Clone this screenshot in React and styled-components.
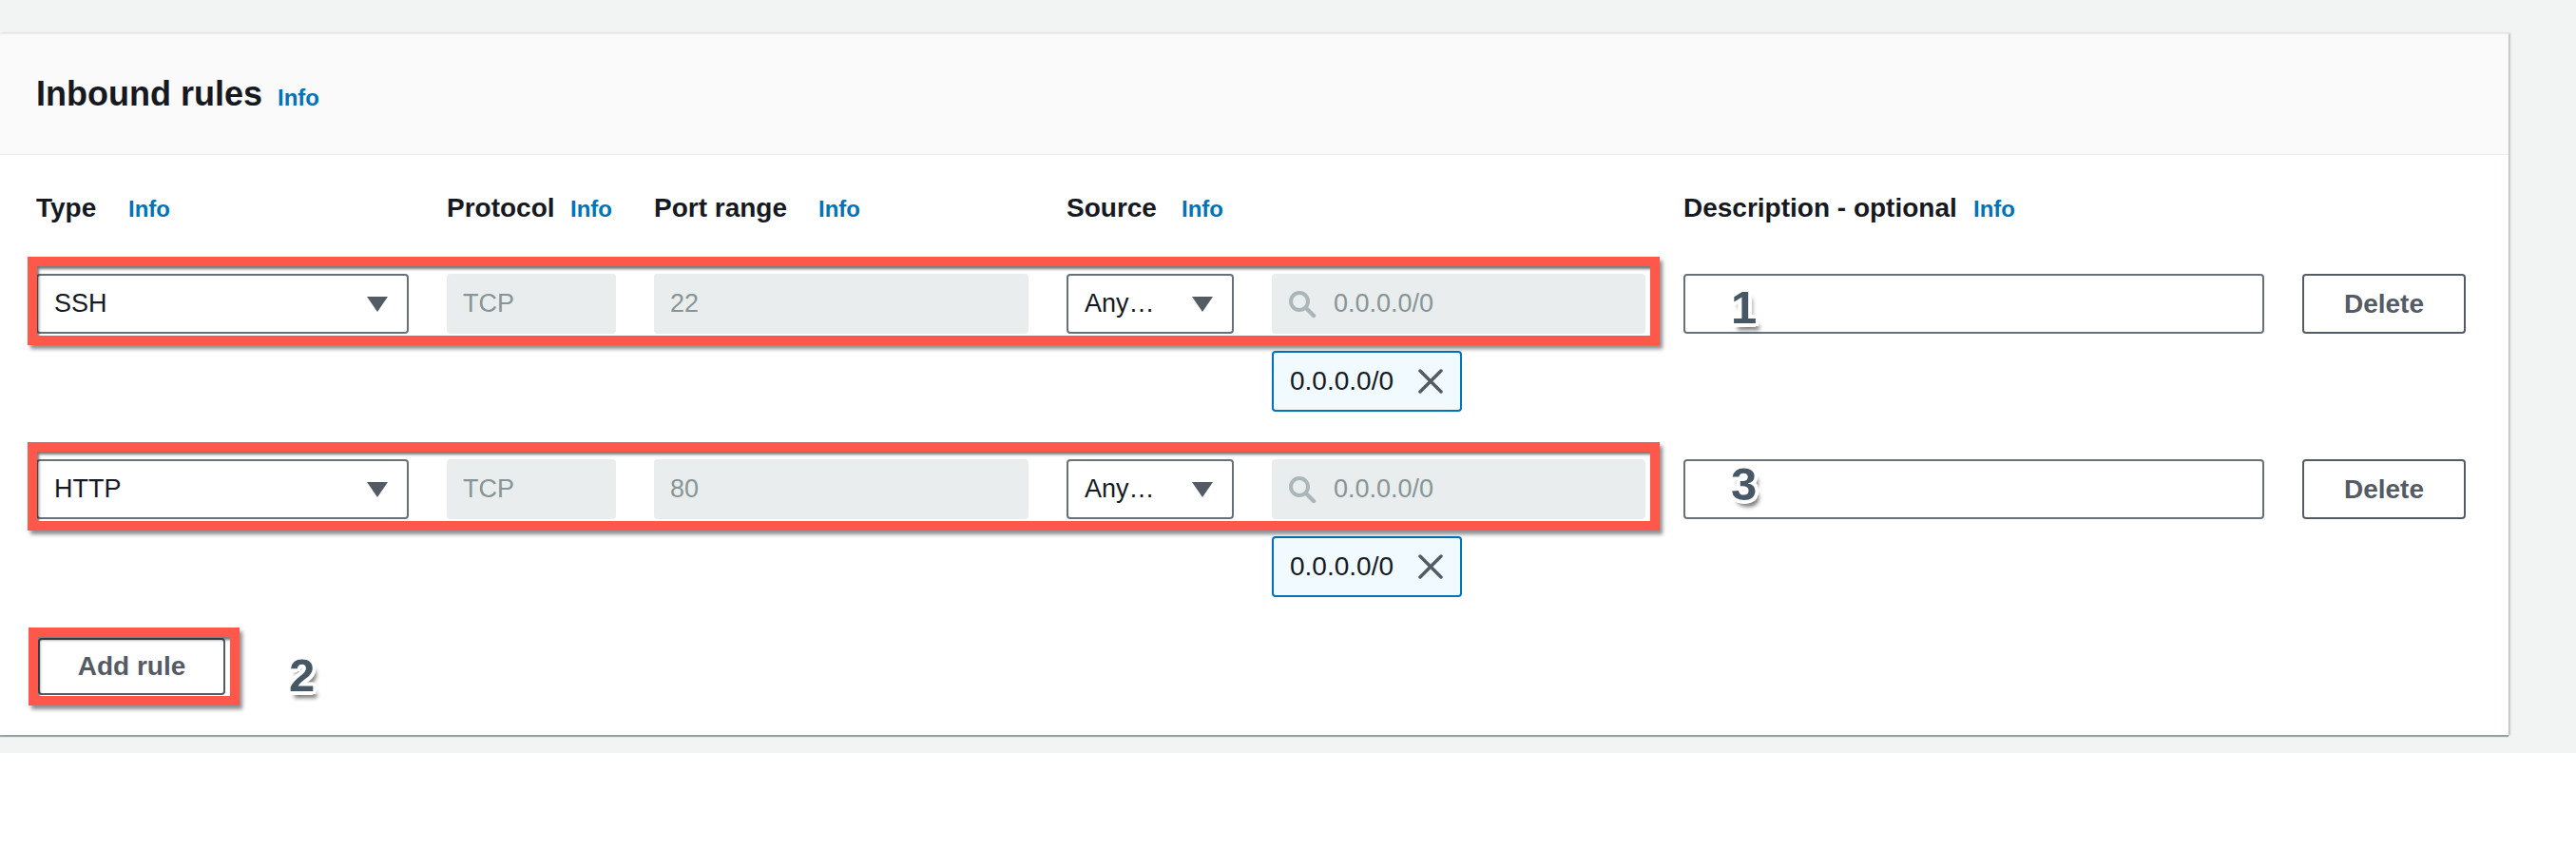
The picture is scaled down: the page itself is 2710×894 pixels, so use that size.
import React from 'react';
import styled, { createGlobalStyle } from 'styled-components';

const GlobalStyle = createGlobalStyle`
  html, body {
    margin: 0;
    padding: 0;
    background: #fff;
  }
  body {
    font-family: "Liberation Sans", Arial, sans-serif;
    color: #16191f;
  }
`;

const COLS = '392px 178px 394px 176px 393px 611px 172px';

const Page = styled.div`
  background: #f2f3f3;
  padding: 35px 71px 19px 0;
`;

const Panel = styled.section`
  background: #fff;
  border-top: 1px solid #eaeded;
  box-shadow: 0 2px 1px 0 rgba(0, 28, 36, 0.35), 2px 0 2px 0 rgba(0, 28, 36, 0.2);
`;

const PanelHeader = styled.header`
  height: 126px;
  background: #fafafa;
  border-bottom: 1px solid #eaeded;
  display: flex;
  align-items: center;
  padding: 0 38px;
`;

const Title = styled.h2`
  margin: 0;
  display: flex;
  align-items: baseline;
  font-size: 36px;
  font-weight: 700;
  color: #16191f;
`;

const InfoLink = styled.a`
  font-size: 24px;
  font-weight: 700;
  color: #0073bb;
  text-decoration: none;
  margin-left: ${(p) => p.$gap || 0}px;
`;

const PanelBody = styled.div`
  padding: 36px 38px 38px;
  display: flex;
  flex-direction: column;
`;

const ColumnHeaders = styled.div`
  display: grid;
  grid-template-columns: ${COLS};
  column-gap: 40px;
  height: 40px;
  align-items: center;
  margin-bottom: 49px;
`;

const HeadCell = styled.div`
  display: flex;
  align-items: baseline;
  grid-column: ${(p) => p.$col};
`;

const Label = styled.span`
  font-size: 28px;
  font-weight: 700;
  color: #16191f;
  min-width: ${(p) => p.$w}px;
`;

const Rules = styled.div`
  display: flex;
  flex-direction: column;
  gap: 50px;
`;

const RuleRow = styled.div`
  position: relative;
  display: grid;
  grid-template-columns: ${COLS};
  grid-template-rows: 63px 64px;
  column-gap: 40px;
  row-gap: 18px;
`;

const Select = styled.div`
  box-sizing: border-box;
  height: 63px;
  border: 2px solid #687078;
  border-radius: 4px;
  background: #fff;
  display: flex;
  align-items: center;
  justify-content: space-between;
  padding: 0 20px 0 17px;
  font-size: 27px;
  color: #16191f;
`;

const ReadOnly = styled.div`
  box-sizing: border-box;
  height: 63px;
  border-radius: 4px;
  background: #eaeded;
  display: flex;
  align-items: center;
  gap: 18px;
  padding: 0 17px;
  font-size: 27px;
  color: #879596;
`;

const Tag = styled.div`
  grid-column: 5;
  grid-row: 2;
  justify-self: start;
  box-sizing: border-box;
  width: 200px;
  height: 64px;
  border: 2px solid #0073bb;
  border-radius: 4px;
  background: #f1faff;
  display: flex;
  align-items: center;
  justify-content: space-between;
  padding: 0 18px 0 17px;
  font-size: 28px;
  color: #16191f;
`;

const DescInput = styled.div`
  position: relative;
  box-sizing: border-box;
  height: 63px;
  border: 2px solid #687078;
  border-radius: 4px;
  background: #fff;
`;

const Button = styled.button`
  box-sizing: border-box;
  height: ${(p) => p.$h || 63}px;
  width: ${(p) => (p.$w ? `${p.$w}px` : 'auto')};
  border: 2px solid #545b64;
  border-radius: 4px;
  background: #fff;
  color: #545b64;
  font-family: inherit;
  font-size: 28px;
  font-weight: 700;
  padding: 0;
`;

const Footer = styled.div`
  display: flex;
  align-items: flex-start;
  margin-top: 43px;
`;

const Marked = styled.div`
  position: relative;
  display: inline-flex;
  margin-left: 2px;
`;

const RedFrame = styled.div`
  position: absolute;
  box-sizing: border-box;
  top: ${(p) => p.$top}px;
  left: ${(p) => p.$left}px;
  width: ${(p) => p.$w}px;
  height: ${(p) => p.$h}px;
  border: 10px solid #fe584a;
  box-shadow: inset 2px 3px 3px rgba(30, 30, 30, 0.6), 3px 4px 4px rgba(0, 0, 0, 0.45);
  pointer-events: none;
`;

const Callout = styled.span`
  font-family: "Liberation Sans", Arial, sans-serif;
  font-size: 49px;
  font-weight: 700;
  line-height: 1;
  color: #475766;
  text-shadow: 4px 0 #fff, -4px 0 #fff, 0 4px #fff, 0 -4px #fff, 3px 3px #fff,
    -3px -3px #fff, 3px -3px #fff, -3px 3px #fff, 4px 7px 4px rgba(0, 0, 0, 0.55);
  margin: ${(p) => p.$m || 0};
`;

const PinnedCallout = styled(Callout)`
  position: absolute;
  top: ${(p) => p.$top}px;
  left: ${(p) => p.$left}px;
`;

const Caret = () => (
  <svg width="22" height="16" viewBox="0 0 22 16">
    <polygon points="0,0 22,0 11,16" fill="#545b64" />
  </svg>
);

const SearchIcon = () => (
  <svg width="30" height="30" viewBox="0 0 30 30">
    <circle cx="12" cy="12" r="9" fill="none" stroke="#aab7b8" strokeWidth="4" />
    <line x1="19" y1="19" x2="27" y2="27" stroke="#aab7b8" strokeWidth="4.5" strokeLinecap="round" />
  </svg>
);

const CloseIcon = () => (
  <svg width="26" height="26" viewBox="0 0 26 26">
    <path d="M2 2 L24 24 M24 2 L2 24" stroke="#545b64" strokeWidth="3.5" strokeLinecap="round" />
  </svg>
);

const rules = [
  { type: 'SSH', port: '22', mark: '1', markTop: 9 },
  { type: 'HTTP', port: '80', mark: '3', markTop: 0 },
];

const RuleLine = ({ rule }) => (
  <RuleRow>
    <Select>
      <span>{rule.type}</span>
      <Caret />
    </Select>
    <ReadOnly>TCP</ReadOnly>
    <ReadOnly>{rule.port}</ReadOnly>
    <Select>
      <span>Any…</span>
      <Caret />
    </Select>
    <ReadOnly>
      <SearchIcon />
      <span>0.0.0.0/0</span>
    </ReadOnly>
    <DescInput>
      <PinnedCallout $top={rule.markTop} $left={48}>{rule.mark}</PinnedCallout>
    </DescInput>
    <Button>Delete</Button>
    <Tag>
      <span>0.0.0.0/0</span>
      <CloseIcon />
    </Tag>
    <RedFrame $top={-18} $left={-9} $w={1717} $h={93} />
  </RuleRow>
);

export default function App() {
  return (
    <>
      <GlobalStyle />
      <Page>
        <Panel>
          <PanelHeader>
            <Title>
              Inbound rules
              <InfoLink $gap={16}>Info</InfoLink>
            </Title>
          </PanelHeader>
          <PanelBody>
            <ColumnHeaders>
              <HeadCell $col="1">
                <Label $w={97}>Type</Label>
                <InfoLink>Info</InfoLink>
              </HeadCell>
              <HeadCell $col="2">
                <Label $w={130}>Protocol</Label>
                <InfoLink>Info</InfoLink>
              </HeadCell>
              <HeadCell $col="3">
                <Label $w={173}>Port range</Label>
                <InfoLink>Info</InfoLink>
              </HeadCell>
              <HeadCell $col="4 / span 2">
                <Label $w={121}>Source</Label>
                <InfoLink>Info</InfoLink>
              </HeadCell>
              <HeadCell $col="6">
                <Label $w={305}>Description - optional</Label>
                <InfoLink>Info</InfoLink>
              </HeadCell>
            </ColumnHeaders>
            <Rules>
              {rules.map((r) => (
                <RuleLine key={r.type} rule={r} />
              ))}
            </Rules>
            <Footer>
              <Marked>
                <Button $w={197} $h={60}>Add rule</Button>
                <RedFrame $top={-11} $left={-10} $w={222} $h={82} />
              </Marked>
              <Callout $m="15px 0 0 67px">2</Callout>
            </Footer>
          </PanelBody>
        </Panel>
      </Page>
    </>
  );
}
